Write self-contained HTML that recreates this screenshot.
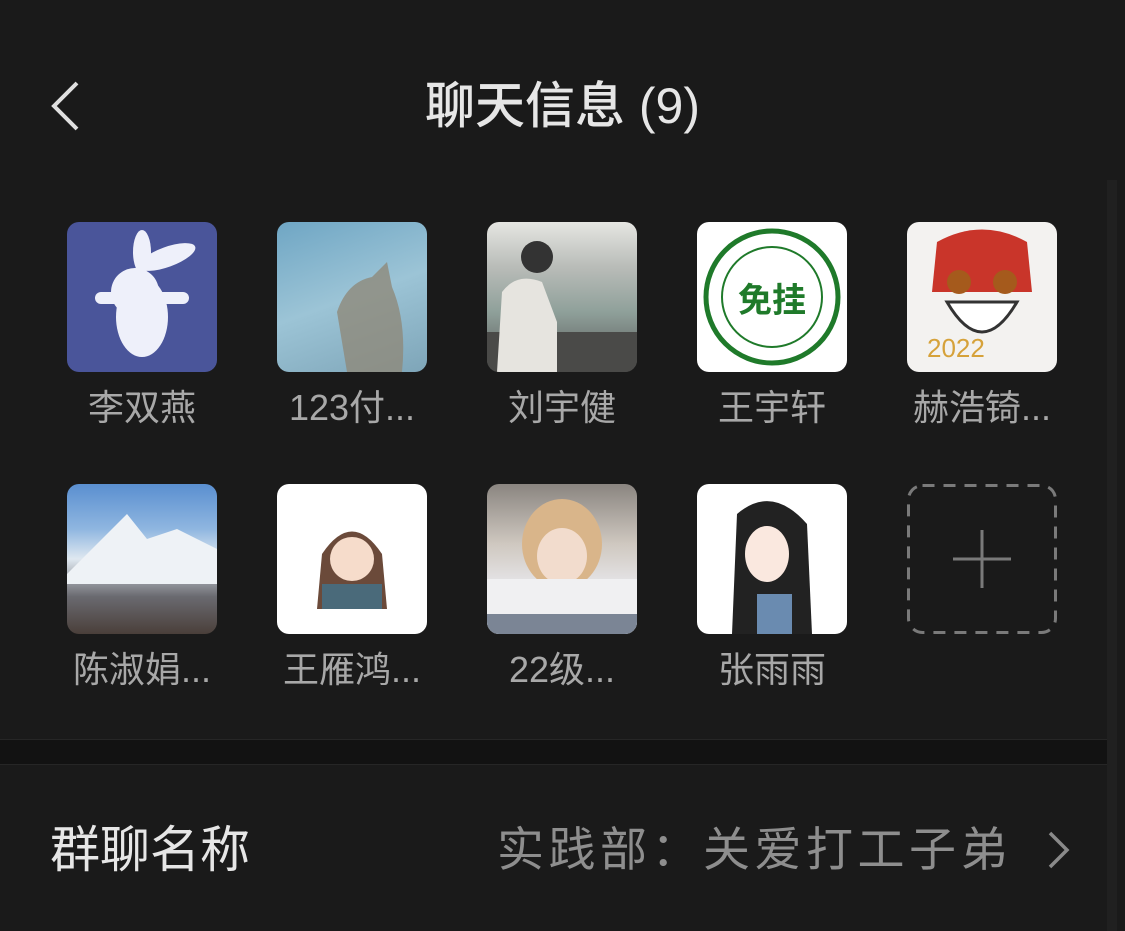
<!DOCTYPE html>
<html><head><meta charset="utf-8"><style>
*{margin:0;padding:0;box-sizing:border-box}
body{width:1125px;height:931px;background:#1a1a1a;overflow:hidden;position:relative;font-family:"Liberation Sans","Noto Sans CJK SC",sans-serif}
.abs{position:absolute}
.title{left:0;width:1125px;top:76px;text-align:center;font-size:50px;color:#e6e6e6;line-height:60px;font-weight:500}
.av{position:absolute;width:150px;height:150px;border-radius:12px;overflow:hidden}
.nm{position:absolute;width:200px;text-align:center;font-size:36px;color:#a8a8a8;line-height:42px}
</style></head><body>
<svg class="abs" style="left:48px;top:80px" width="34" height="52"><path d="M29 3 L6 26 L29 49" stroke="#e0e0e0" stroke-width="4" fill="none"/></svg>
<div class="abs title">聊天信息 (9)</div>
<div class="abs" style="left:1107px;top:180px;width:10px;height:751px;background:#202020"></div>

<div class="av" style="left:67px;top:222px;background:#4a559a">
<svg width="150" height="150"><ellipse cx="75" cy="95" rx="26" ry="40" fill="#eef0fa"/><circle cx="68" cy="70" r="24" fill="#eef0fa"/><ellipse cx="100" cy="35" rx="30" ry="10" fill="#eef0fa" transform="rotate(-20 100 35)"/><ellipse cx="75" cy="30" rx="9" ry="22" fill="#eef0fa"/><rect x="28" y="70" width="94" height="12" rx="6" fill="#eef0fa"/></svg></div>
<div class="av" style="left:277px;top:222px;background:linear-gradient(160deg,#6fa6c4,#9cc4d6 50%,#7ea5b8)">
<svg width="150" height="150"><path d="M70 150 L60 90 Q70 60 95 55 L110 40 L115 65 Q130 100 125 150Z" fill="#8f8a7a" opacity=".8"/></svg></div>
<div class="av" style="left:487px;top:222px;background:linear-gradient(180deg,#e6e6e2 0%,#b9bcb8 30%,#8fa09a 60%,#555 100%)">
<svg width="150" height="150"><rect x="0" y="110" width="150" height="40" fill="#4a4a48"/><path d="M10 150 L15 70 Q30 50 55 60 L70 100 L70 150Z" fill="#e6e4df"/><circle cx="50" cy="35" r="16" fill="#333"/></svg></div>
<div class="av" style="left:697px;top:222px;background:#fff">
<svg width="150" height="150"><circle cx="75" cy="75" r="66" fill="none" stroke="#1f7a2a" stroke-width="5"/><circle cx="75" cy="75" r="50" fill="none" stroke="#1f7a2a" stroke-width="2"/><text x="75" y="90" text-anchor="middle" font-size="34" font-weight="bold" fill="#1f7a2a" font-family="Noto Sans CJK SC,sans-serif">免挂</text></svg></div>
<div class="av" style="left:907px;top:222px;background:#f3f2f0">
<svg width="150" height="150"><path d="M30 20 Q75 -5 120 20 L125 70 L25 70Z" fill="#c9352a"/><circle cx="52" cy="60" r="12" fill="#a55a1c"/><circle cx="98" cy="60" r="12" fill="#a55a1c"/><path d="M40 80 Q75 140 110 80Z" fill="#fff" stroke="#333" stroke-width="3"/><text x="20" y="135" font-size="26" fill="#d6a23a">2022</text></svg></div>

<div class="nm" style="left:42px;top:387px">李双燕</div>
<div class="nm" style="left:252px;top:387px">123付...</div>
<div class="nm" style="left:462px;top:387px">刘宇健</div>
<div class="nm" style="left:672px;top:387px">王宇轩</div>
<div class="nm" style="left:882px;top:387px">赫浩锜...</div>

<div class="av" style="left:67px;top:484px;background:linear-gradient(180deg,#5a8fd0 0%,#8fb6e0 30%,#dfe8f0 50%,#6a6a70 75%,#4a3f3a 100%)">
<svg width="150" height="150"><path d="M0 90 L40 50 L60 30 L80 55 L110 45 L150 65 L150 100 L0 100Z" fill="#eef2f6"/></svg></div>
<div class="av" style="left:277px;top:484px;background:#fff">
<svg width="150" height="150"><path d="M45 70 Q75 25 105 70 L110 125 L40 125Z" fill="#6b4a3a"/><circle cx="75" cy="75" r="22" fill="#f6dccb"/><rect x="45" y="100" width="60" height="25" fill="#4a6a7a"/></svg></div>
<div class="av" style="left:487px;top:484px;background:linear-gradient(180deg,#8a8580,#cfc8c0 40%,#e8e8ec 70%,#9aa0aa)">
<svg width="150" height="150"><ellipse cx="75" cy="60" rx="40" ry="45" fill="#d9b58a"/><ellipse cx="75" cy="72" rx="25" ry="28" fill="#f2dccd"/><rect x="0" y="95" width="150" height="55" fill="#f0f0f2"/><rect x="0" y="130" width="150" height="20" fill="#7b8595"/></svg></div>
<div class="av" style="left:697px;top:484px;background:#fff">
<svg width="150" height="150"><path d="M40 30 Q75 0 110 40 L115 150 L35 150Z" fill="#222"/><ellipse cx="70" cy="70" rx="22" ry="28" fill="#fae8df"/><rect x="60" y="110" width="35" height="40" fill="#6a8bb0"/></svg></div>
<svg class="abs" style="left:907px;top:484px" width="150" height="150"><rect x="1.5" y="1.5" width="147" height="147" rx="14" fill="none" stroke="#7a7a7a" stroke-width="3" stroke-dasharray="12 9"/><path d="M75 46 V104 M46 75 H104" stroke="#7a7a7a" stroke-width="3"/></svg>

<div class="nm" style="left:42px;top:649px">陈淑娟...</div>
<div class="nm" style="left:252px;top:649px">王雁鸿...</div>
<div class="nm" style="left:462px;top:649px">22级...</div>
<div class="nm" style="left:672px;top:649px">张雨雨</div>

<div class="abs" style="left:0;top:739px;width:1107px;height:26px;background:#121212;border-top:1px solid #262626;border-bottom:1px solid #262626"></div>
<div class="abs" style="left:50px;top:820px;font-size:50px;color:#e6e6e6;line-height:60px">群聊名称</div>
<div class="abs" style="left:497px;top:820px;font-size:47px;letter-spacing:4.5px;color:#8e8e8e;line-height:60px;white-space:nowrap">实践部：关爱打工子弟</div>
<svg class="abs" style="left:1046px;top:830px" width="26" height="40"><path d="M4 3 L21 20 L4 37" stroke="#8a8a8a" stroke-width="3.5" fill="none"/></svg>
</body></html>
